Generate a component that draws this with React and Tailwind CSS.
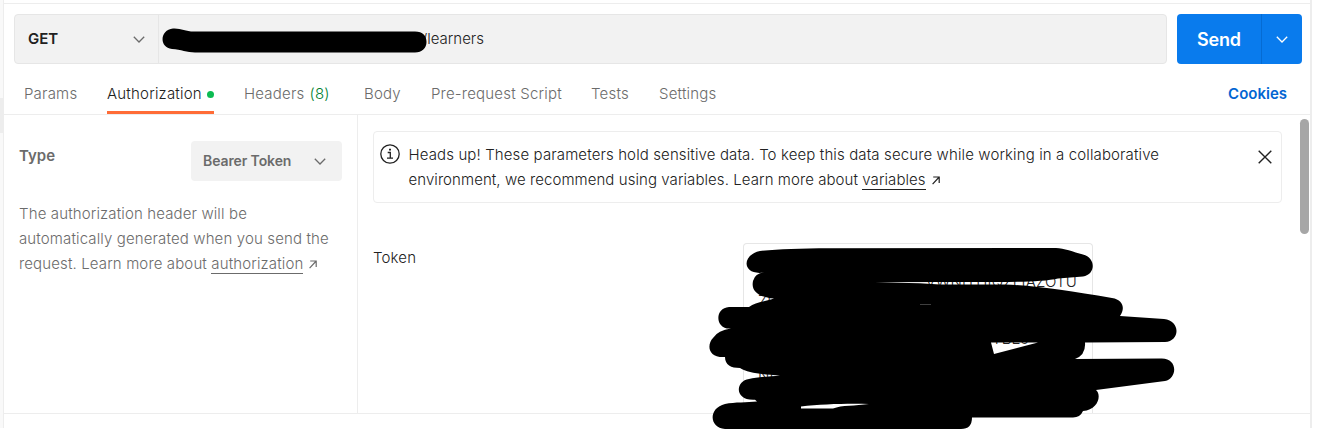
import clsx from "clsx";

const tabs = [
    { label: "Params", className: "w-[83px]" },
    { label: "Authorization", className: "w-[137px]", active: true },
    { label: "Headers", className: "w-[120px]", count: 8 },
    { label: "Body", className: "w-[67px]" },
    { label: "Pre-request Script", className: "w-[160px]" },
    { label: "Tests", className: "w-[68px]" },
    { label: "Settings", className: "w-[80px]" },
];

const Chevron = ({ className }) => (
    <svg width="12" height="7" viewBox="0 0 12 7" fill="none" stroke="currentColor" strokeWidth="1.3" className={className}>
        <path d="M.8.8 6 6 11.2.8" />
    </svg>
);

const ExternalArrow = () => (
    <svg width="8" height="9" viewBox="0 0 8 9" fill="none" stroke="currentColor" strokeWidth="1.2" className="ml-[6px] inline-block align-baseline">
        <path d="M1.2 1H7.2v6M7.2 1 .6 8.2" />
    </svg>
);

const InfoIcon = () => (
    <svg width="20" height="20" viewBox="0 0 20 20" fill="none" stroke="currentColor" strokeWidth="1.3" className="shrink-0">
        <circle cx="10" cy="10" r="9.2" />
        <path d="M7.7 8.5H10.3V14M7 14.2h6" />
        <path d="M9 5.6h2" strokeWidth="1.8" />
    </svg>
);

const RequestBar = () => (
    <div className="flex h-[50px] gap-[10px]">
        <div className="flex w-[1153px] rounded border border-[#e6e6e6] bg-[#f2f2f2]">
            <div className="flex w-[144px] items-center justify-between border-r border-[#e6e6e6] pl-[13px] pr-[13px]">
                <span className="pt-px text-[15px] font-semibold">GET</span>
                <Chevron className="text-[#6b6b6b]" />
            </div>
            <div className="relative flex items-center pl-[263px] text-[15px]">
                <span className="font-light">/learners</span>
                <svg width="270" height="28" className="absolute left-0 top-[12px]">
                    <path d="M14 1.5C22 1 26 4.5 35 4.5H256C264 4.5 267.500 9 267.500 15S263 25.500 256 25.500H36C28 25.500 22 22.500 13 22C-.5 20.500 1 2.500 14 1.500Z" />
                </svg>
            </div>
        </div>
        <div className="flex w-[125px] rounded bg-[#097bed] text-white">
            <button className="w-[84px] text-[18px] font-semibold tracking-[-0.2px]">Send</button>
            <button className="flex flex-1 items-center justify-center border-l border-[#056bd3]">
                <Chevron />
            </button>
        </div>
    </div>
);

const TabRow = () => (
    <div className="flex h-[51px] items-stretch border-b border-[#ededed] pl-5 pr-[23px] text-[15px] text-[#6b6b6b]">
        {tabs.map((tab) => (
            <div key={tab.label} className={clsx("flex shrink-0", tab.className)}>
                <div
                    className={clsx(
                        "flex items-center whitespace-nowrap border-b-[3px] pt-[14px] tracking-[0.2px]",
                        tab.active ? "border-[#ff6c37] text-[#212121]" : "border-transparent"
                    )}
                >
                    <span className="font-light">{tab.label}</span>
                    {tab.active && <span className="ml-[5px] h-[7px] w-[7px] rounded-full bg-[#0cbb52]" />}
                    {tab.count && <span className="ml-[5px] font-light text-[#007f31]">({tab.count})</span>}
                </div>
            </div>
        ))}
        <span className="ml-auto flex items-center pt-[11px] font-semibold text-[#0265d2]">Cookies</span>
    </div>
);

const TypePanel = () => (
    <div className="w-[354px] border-r border-[#ededed] pl-[15px] pr-[15px] pt-[26px] text-[#6b6b6b]">
        <div className="flex items-start justify-between">
            <span className="pt-[5px] text-[15px] font-semibold leading-5">Type</span>
            <div className="flex h-10 w-[151px] items-center justify-between rounded bg-[#f2f2f2] pl-3 pr-4">
                <span className="pb-[2px] text-[14px] font-semibold tracking-[-0.1px]">Bearer Token</span>
                <Chevron />
            </div>
        </div>
        <p className="mt-5 whitespace-nowrap text-[15px] font-light leading-[25px] tracking-[0.13px]">
            The authorization header will be
            <br />
            automatically generated when you send the
            <br />
            request. Learn more about <a className="border-b border-current">authorization</a>
            <ExternalArrow />
        </p>
    </div>
);

// Outline of the marker strokes, with the gaps between them cut out by evenodd
const TokenRedaction = () => (
    <svg width="470" height="183" viewBox="709 247 470 183" className="absolute -left-[35px] top-[3px]">
        <path
            fillRule="evenodd"
            d="M760 251C778 249 798 248.500 830 248.200L1056 248C1064 248 1073 252 1083 254.500C1096 258 1096 274 1083 276.500L1058 278.500C1044 282 1010 282 980 282H940V284.500H1005C1039 286 1068 291 1112 298C1124 300 1125 309 1120 316L1164 319C1181 321 1180 341 1165 342L1085 342.500Q1086 355 1075 359L1160 358.500C1178 357 1178 378 1165 381L1096 390C1102 395 1098 410 1083 411Q1080 418 1072 417.500H972Q972 429 961 429H725C709 428 708 408 725 404C735 402 747 402.500 757 401.500L755 399.700C734 401 735 381 749 379C757 377 770 376.500 780 375.500C763 374.500 748 373 740 368C731 368 725 365 725 357C707 358 707 344 713 338Q718 330 731 328.500C715 330 714 308 729 307H749C755 302 764 302 774 298.500C757 297 751 290 753 281Q755 273 764 272.500C742 276 741 255 760 251ZM875 282.200 940 282V284.500L920 283.300ZM920 304.200H931V304.400H920ZM991 342.500H1038L994 354ZM801 406.500C822 404 850 403.300 869 404C855 406 842 405 833 408.500H801Z"
        />
    </svg>
);

const TokenField = () => (
    <div className="relative h-[170px] w-[350px] rounded-t border border-b-0 border-[#e6e6e6]">
        <div className="h-[169px] overflow-hidden whitespace-nowrap pt-[25px] text-[15px] leading-[25px]">
            <div className="pr-[15px] text-right font-light tracking-[0.2px]">VWNIYHIQZLIAZOTU</div>
            <div className="-mt-[6px] pl-[14px] font-light">ZD</div>
            <div className="pl-[239px] font-light leading-[52px]">FYBEJ</div>
            <div className="-mt-[6px] pl-[14px] font-light leading-[34px]">NI</div>
        </div>
        <TokenRedaction />
    </div>
);

const AuthDetails = () => (
    <div className="flex flex-1 justify-between pl-[15px] pr-px pt-4">
        <div className="w-[909px]">
            <div className="flex h-[72px] rounded border border-[#ededed] pl-[6px] pr-[9px] pt-[10px]">
                <div className="pt-[2px]">
                    <InfoIcon />
                </div>
                <p className="ml-[8.5px] whitespace-nowrap text-[15px] font-light leading-[25px] tracking-[0.12px]">
                    Heads up! These parameters hold sensitive data. To keep this data secure while working in a collaborative
                    <br />
                    <span className="tracking-[0.07px]">
                        environment, we recommend using variables. Learn more about <a className="border-b border-current">variables</a>
                    </span>
                    <ExternalArrow />
                </p>
                <svg width="14" height="14" viewBox="0 0 14 14" fill="none" stroke="currentColor" strokeWidth="1.4" className="ml-auto mt-2">
                    <path d="m.7.7 12.600 12.600M13.300.7.7 13.300" />
                </svg>
            </div>
            <div className="mt-10 flex">
                <span className="w-[370px] pt-[5px] text-[15px] font-light leading-5 tracking-[0.15px]">Token</span>
                <TokenField />
            </div>
        </div>
        <div className="-mt-[12px] h-[115px] w-[9px] rounded-full bg-[#a6a6a6]" />
    </div>
);

export default function App() {
    return (
        <div className="flex h-[430px] w-[1322px] overflow-hidden bg-white font-['Inter','Liberation_Sans',sans-serif] text-[#212121]">
            <div className="h-[428px] w-1 shrink-0 border-r border-[#ededed] bg-[#f9f9f9] pt-[98px]">
                <div className="h-[35px] bg-[#ededed]" />
            </div>
            <div className="h-[428px] w-[1308px] shrink-0 border-r-2 border-[#ededed]">
                <div className="h-1 border-b border-[#ededed]" />
                <div className="pl-[10px] pt-[10px]">
                    <RequestBar />
                </div>
                <TabRow />
                <div className="flex h-[299px] border-b border-[#ededed]">
                    <TypePanel />
                    <AuthDetails />
                </div>
            </div>
        </div>
    );
}
